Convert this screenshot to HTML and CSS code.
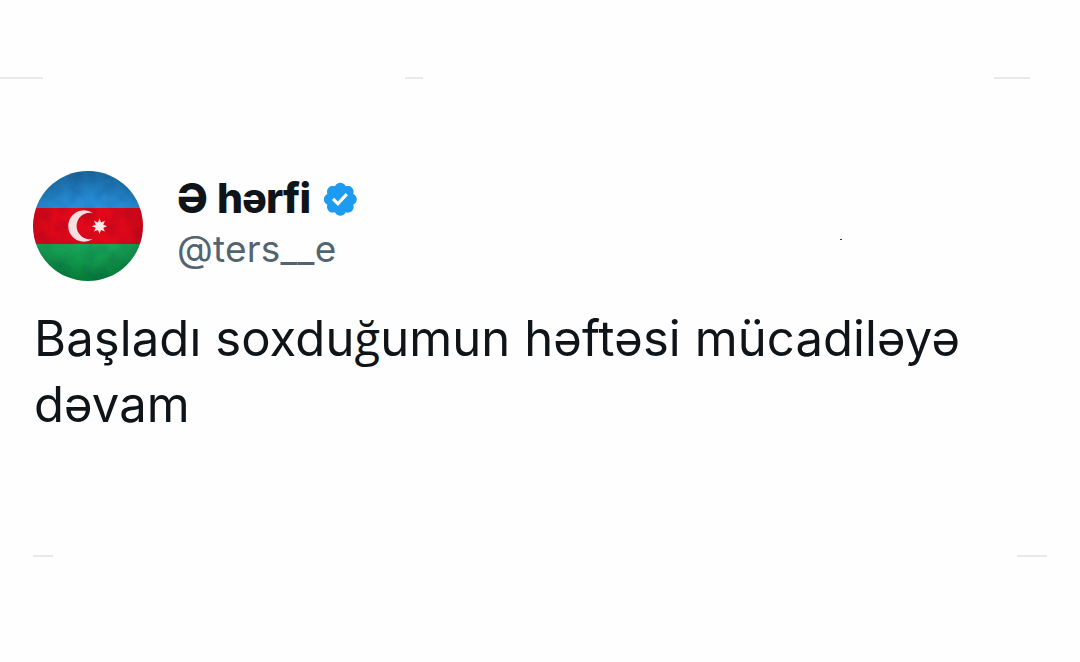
FILE: index.html
```html
<!DOCTYPE html>
<html lang="az">
<head>
    <meta charset="UTF-8">
    <meta name="viewport" content="width=device-width, initial-scale=1.0">
    <title>Ə hərfi</title>
    <link rel="stylesheet" href="styles.css">
</head>
<body>
    <div class="rules rules-top">
        <span class="rule rule-left"></span>
        <span class="rule rule-center"></span>
        <span class="rule rule-right"></span>
    </div>

    <div class="post">
        <div class="header">
            <svg class="avatar" viewBox="0 0 110 110">
                <defs>
                    <clipPath id="circle"><circle cx="55" cy="55" r="55"/></clipPath>
                    <linearGradient id="blue" x1="0" y1="0" x2="0" y2="1">
                        <stop offset="0" stop-color="#1b71ad"/>
                        <stop offset="1" stop-color="#2890db"/>
                    </linearGradient>
                    <linearGradient id="green" x1="0" y1="0" x2="0" y2="1">
                        <stop offset="0" stop-color="#1aa65a"/>
                        <stop offset="1" stop-color="#07883d"/>
                    </linearGradient>
                    <radialGradient id="shade">
                        <stop offset="0.6" stop-color="#000" stop-opacity="0"/>
                        <stop offset="1" stop-color="#000" stop-opacity="0.1"/>
                    </radialGradient>
                    <filter id="grain" x="0" y="0" width="1" height="1">
                        <feTurbulence type="fractalNoise" baseFrequency="0.08" numOctaves="3" seed="4"/>
                        <feColorMatrix values="0 0 0 0 0  0 0 0 0 0  0 0 0 0 0.05  0.9 0 0 0 -0.32"/>
                    </filter>
                </defs>
                <g clip-path="url(#circle)">
                    <rect width="110" height="37" fill="url(#blue)"/>
                    <rect y="37" width="110" height="36" fill="#e1081a"/>
                    <rect y="73" width="110" height="37" fill="url(#green)"/>
                    <rect width="110" height="110" filter="url(#grain)" opacity="0.25"/>
                    <rect width="110" height="110" fill="url(#shade)"/>
                    <path d="M60 42.2A15.7 15.7 0 1 0 60 67.8A13.2 13.2 0 1 1 60 42.2Z" fill="#f5dfe0"/>
                    <path d="M66.5 47.4l1.5 4 3.9-1.6-1.6 3.9 3.8 1.5-3.8 1.5 1.6 3.9-3.9-1.6-1.5 4-1.5-4-3.9 1.6 1.6-3.9-3.8-1.5 3.8-1.5-1.6-3.9 3.9 1.6z" fill="#fae9e9"/>
                </g>
            </svg>
            <div class="author">
                <div class="name">
                    <span class="name-text">Ə hərfi</span>
                    <svg class="badge" viewBox="0 0 22 22">
                        <path fill="#1d9bf0" d="M20.396 11c-.018-.646-.215-1.275-.57-1.816-.354-.54-.852-.972-1.438-1.246.223-.607.27-1.264.14-1.897-.131-.634-.437-1.218-.882-1.687-.47-.445-1.053-.75-1.687-.882-.633-.13-1.29-.083-1.897.14-.273-.587-.704-1.086-1.245-1.44S11.647 1.62 11 1.604c-.646.017-1.273.213-1.813.568s-.969.854-1.24 1.44c-.608-.223-1.267-.272-1.902-.14-.635.13-1.22.436-1.69.882-.445.47-.749 1.055-.878 1.688-.13.633-.08 1.29.144 1.896-.587.274-1.087.705-1.443 1.245-.356.54-.555 1.17-.574 1.817.02.647.218 1.276.574 1.817.356.54.856.972 1.443 1.245-.224.606-.274 1.263-.144 1.896.13.634.433 1.218.877 1.688.47.443 1.054.747 1.687.878.633.132 1.29.084 1.897-.136.274.586.705 1.084 1.246 1.439.54.354 1.17.551 1.816.569.647-.016 1.276-.213 1.817-.567s.972-.854 1.245-1.44c.604.239 1.266.296 1.903.164.636-.132 1.22-.447 1.68-.907.46-.46.776-1.044.908-1.681s.075-1.299-.165-1.903c.586-.274 1.084-.705 1.439-1.246.354-.54.551-1.17.569-1.816zM9.662 14.85l-3.429-3.428 1.293-1.302 2.072 2.072 4.4-4.794 1.347 1.246z"/>
                    </svg>
                </div>
                <div class="handle">@ters__e</div>
            </div>
            <span class="dot"></span>
        </div>
        <p class="text">Başladı soxdu<span class="g">ğ</span>umun həftəsi mücadiləyə<br>dəvam</p>
    </div>

    <div class="rules rules-bottom">
        <span class="rule rule-left"></span>
        <span class="rule rule-right"></span>
    </div>
</body>
</html>
```
FILE: styles.css
```css
body {
    font-family: 'Inter', sans-serif;
    margin: 0;
    background-color: #fefefe;
    color: #0f1419;
    height: 662px;
    overflow: hidden;
}
.rules {
    display: flex;
    height: 2px;
}
.rule {
    background-color: #e9e9e9;
}
.rules-top {
    padding-top: 77px;
}
.rules-top .rule-left {
    width: 43px;
}
.rules-top .rule-center {
    width: 18px;
    margin-left: 362px;
}
.rules-top .rule-right {
    width: 36px;
    margin-left: 571px;
}
.post {
    height: 384px;
    padding: 92px 33px 0;
}
.header {
    display: flex;
    height: 110px;
}
.avatar {
    width: 110px;
    height: 110px;
}
.author {
    width: 200px;
    margin-left: 34px;
}
.name {
    display: flex;
    align-items: center;
    height: 56px;
}
.name-text {
    padding-bottom: 3px;
    font-size: 41px;
    font-weight: 800;
    letter-spacing: -0.9px;
    word-spacing: 2px;
    white-space: nowrap;
}
.badge {
    width: 38.6px;
    height: 38.6px;
    margin-left: 11px;
    flex-shrink: 0;
}
.handle {
    font-size: 37px;
    line-height: 43px;
    letter-spacing: 0.2px;
    color: #536471;
    white-space: nowrap;
}
.dot {
    width: 2px;
    height: 1px;
    margin: 68px 0 0 463px;
    background-color: #333;
}
.text {
    margin: 24px 0 0 1px;
    font-size: 49px;
    line-height: 66px;
    letter-spacing: 0.1px;
}
.text .g {
    font-family: 'Open Sans', sans-serif;
    font-size: 47px;
}
.rules-bottom .rule-left {
    width: 20px;
    margin-left: 33px;
}
.rules-bottom .rule-right {
    width: 30px;
    margin-left: 964px;
}
```
